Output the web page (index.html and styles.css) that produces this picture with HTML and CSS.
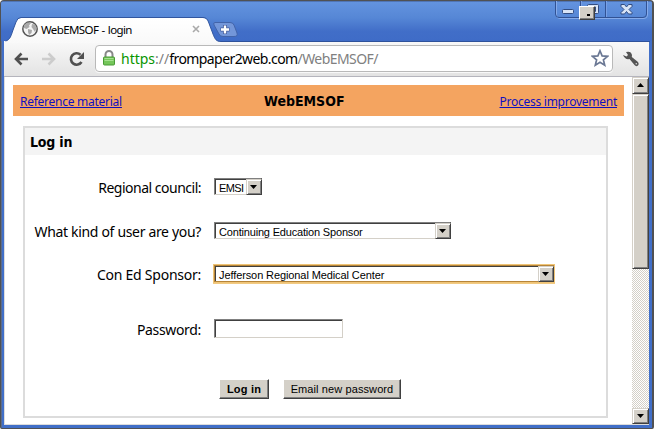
FILE: index.html
```html
<!DOCTYPE html>
<html lang="en">
<head>
<meta charset="utf-8">
<title>WebEMSOF - login</title>
<link rel="stylesheet" href="styles.css">
</head>
<body>
<div class="window">
  <header class="tabstrip">
    <div class="tab">
      <svg class="tab-shape" width="650" height="26" viewBox="0 0 650 26">
        <defs><linearGradient id="tabfill" x1="0" y1="0" x2="0" y2="1"><stop offset="0" stop-color="#fff"/><stop offset="1" stop-color="#f9f9f9"/></linearGradient></defs>
        <path d="M210 24.500H646" stroke="#2f529b" fill="none"/>
        <path d="M1.500 26V24C6 23 7 19 9 13L12 5Q13.500 1 17 1H199Q203 1 204.500 5L209 17C211 22 212 24.500 217 24.500V26Z" fill="url(#tabfill)"/>
        <path d="M1.500 24C6 23 7 19 9 13L12 5Q13.500 .500 17 .500H199Q203 .500 204.500 5L209 17C211 22 212 24.500 217 24.500" fill="none" stroke="#31569f"/>
        <path d="M211 5.500H226Q229 5.500 230 8L233 16Q234 19.500 230 19.500H219Q216 19.500 215 17L210 8Q209 5.500 211 5.500Z" fill="#7396d9" stroke="#4264aa"/>
        <path d="M221 8v9M216.500 12.500h9" stroke="#40599a" stroke-width="4"/>
        <path d="M221 8.500v8M217 12.500h8" stroke="#fff" stroke-width="2.400"/>
      </svg>
      <svg class="globe" width="18" height="18" viewBox="0 0 18 18"><circle cx="9" cy="9" r="7.200" fill="#f4f4f4" stroke="#555" stroke-width="1.500"/><path d="M3 5L6 2.500L10 3L8 5.500L8.500 7L5.500 9L3 8ZM7 9L11 10L10.500 13L8 15L7 12ZM11 4L14 4.500L15.500 8L14 12L12 9L10.500 7Z" fill="#aaa"/></svg>
      <span class="tab-title">WebEMSOF - login</span>
      <svg class="tab-close" width="8" height="8" viewBox="0 0 8 8"><path d="M1 1l6 6M7 1L1 7" stroke="#aaa" stroke-width="1.600"/></svg>
    </div>
    <svg class="controls" width="94" height="20" viewBox="0 0 94 20">
      <path d="M1.500 0V14Q1.500 17.500 5 17.500H89Q92.500 17.500 92.500 14V0" fill="none" stroke="#86abea"/>
      <path d="M.500 0V13Q.500 16.500 4 16.500H88Q91.500 16.500 91.500 13V0M25.500 0V16M50.500 0V16" fill="none" stroke="#315294"/>
      <path d="M26.500 0V16M51.500 0V16" stroke="#78a0e5"/>
      <rect x="7.500" y="8.500" width="11" height="4" rx="1" fill="#d8e4f6" stroke="#324d82"/>
      <rect x="32.500" y="3.500" width="11" height="9" rx="1" fill="#d8e4f6" stroke="#324d82"/><path d="M37 6h3.500v4.500h-2" fill="none" stroke="#324d82"/>
      <path d="M66 3.500h3.500l2 2.500l2-2.500H77v2l-3 3l3 3v1.500h-3.500l-2-2.500l-2 2.500H66v-1.500l3-3l-3-3Z" fill="#d8e4f6" stroke="#324d82"/>
    </svg>
    <span class="drag-chip"></span>
  </header>

  <nav class="toolbar">
    <svg width="90" height="34" viewBox="0 0 90 34">
      <path d="M24 17H12M17.500 11.500L12 17L17.500 22.500" fill="none" stroke="#505050" stroke-width="2.600"/>
      <path d="M38 17H50M44.500 11.500L50 17L44.500 22.500" fill="none" stroke="#ccc" stroke-width="2.600"/>
      <path d="M77.500 20A5.700 5.700 0 1 1 76.500 12.800" fill="none" stroke="#505050" stroke-width="2.600"/><path d="M80 10v7h-7Z" fill="#505050"/>
    </svg>
    <div class="address">
      <svg width="14" height="18" viewBox="0 0 14 18"><path d="M3.500 9V5.500a3.500 3.500 0 0 1 7 0V9" fill="none" stroke="#888" stroke-width="2"/><rect x="1.500" y="8" width="11" height="8" rx="1" fill="#75c65a" stroke="#489b35"/><path d="M2.500 9.500h9M2.500 11.500h9" stroke="#a6e190"/></svg>
      <span class="url"><span class="protocol"><span class="scheme">https</span><span class="dim">://</span></span>frompaper2web.com<span class="dim">/WebEMSOF/</span></span>
      <svg class="star" width="18" height="18" viewBox="0 0 18 18"><path d="M9 1.800L11.100 6.900L16.500 7.300L12.400 10.800L13.700 16.200L9 13.300L4.300 16.200L5.600 10.800L1.500 7.300L6.900 6.900Z" fill="#fff" stroke="#6b7894" stroke-width="1.700"/></svg>
    </div>
    <svg class="wrench" width="18" height="18" viewBox="0 0 18 18"><path d="M4 2Q9 .500 10 5L9.800 7L16 12Q17.500 14 16 15.500Q14 17 12.500 15L7.500 9Q3 10 1 5L4.500 6.500L6 5Z" fill="#555"/><circle cx="14.300" cy="13.800" r=".8" fill="#ddd"/></svg>
  </nav>

  <div class="viewport">
    <main class="page">
      <div class="banner">
        <a class="ref" href="#">Reference material</a>
        <h1>WebEMSOF</h1>
        <a class="imp" href="#">Process improvement</a>
      </div>
      <section class="panel">
        <h2>Log in</h2>
        <form class="form">
          <label class="tight">Regional council:</label>
          <div class="select s1"><span>EMSI</span><i class="drop"></i></div>
          <label>What kind of user are you?</label>
          <div class="select s2"><span>Continuing Education Sponsor</span><i class="drop"></i></div>
          <label class="loose">Con Ed Sponsor:</label>
          <div class="select s3 focused"><span>Jefferson Regional Medical Center</span><i class="drop"></i></div>
          <label>Password:</label>
          <input class="password" type="password">
          <div class="actions"><button class="login" type="button">Log in</button><button class="email" type="button">Email new password</button></div>
        </form>
      </section>
    </main>
    <aside class="scrollbar"><i class="bevel up"></i><i class="bevel thumb"></i><i class="track"></i><i class="bevel down"></i></aside>
  </div>
</div>
</body>
</html>
```
FILE: styles.css
```css
* { box-sizing: border-box; }
body { margin: 0; background: #fff; overflow: hidden; font-family: "Noto Sans", sans-serif; color: #000; }
.window { width: 654px; height: 429px; border: 1px solid #505153; border-right-width: 2px; border-radius: 4px 4px 2px 2px; background: #416fc8; overflow: hidden; padding: 0 3px; box-shadow: inset 1px 0 #5a6c8e; }
.tabstrip { position: relative; height: 40px; margin: 0 -3px; background: linear-gradient(#6393df, #5687d6 40%, #416ec8 75%, #3f6cc7); border-top: 1px solid #5075b5; }
.tab { display: flex; align-items: center; height: 26px; margin-left: 3px; padding: 0 0 0 17px; position: relative; top: 15px; }
.tab-shape { position: absolute; left: 0; top: 0; }
.globe { position: relative; top: -1px; }
.tab-title { position: relative; top: -1px; margin-left: 2px; font-size: 11.500px; letter-spacing: -.6px; word-spacing: .8px; width: 151px; white-space: nowrap; }
.tab-close { position: relative; top: -1px; }
.controls { position: absolute; left: 554px; top: -1px; }
.drag-chip { position: absolute; left: 578px; top: 4px; width: 16px; height: 14px; background: #d4d0c8; border: 1px solid; border-color: #fff #404040 #404040 #fff; box-shadow: inset -1px -1px #808080; }
.drag-chip::after { content: ""; position: absolute; left: 7px; top: 7px; width: 3px; height: 2px; background: #000; }
.toolbar { display: flex; align-items: center; height: 36px; background: linear-gradient(#f9f9f9, #e3e3e3); border-bottom: 1px solid #b5b5bd; }
.address { display: flex; align-items: center; margin-left: 1px; margin-top: -1px; width: 518px; height: 27px; background: #fff; border: 1px solid #b9b9b9; border-radius: 4px; padding-left: 6px; box-shadow: 0 1px #f8f8f8; }
.url { margin-left: 5px; flex: 1; white-space: nowrap; font-size: 14px; letter-spacing: -.58px; }
.protocol { letter-spacing: 0; }
.scheme { color: #079500; }
.dim { color: #808080; }
.star { margin-right: 3px; }
.wrench { margin-left: 9px; }
.viewport { display: flex; height: 348px; background: #fff; border-left: 1px solid #ddd; border-bottom: 1px solid #dcdcdc; }
.page { flex: 1; padding: 8px 8px 0; }
.banner { display: grid; grid-template-columns: 244px auto 1fr; align-items: center; height: 31px; background: #f4a460; padding: 1px 7px 0; }
.banner a { font-size: 12px; color: #1010c0; text-decoration: underline; letter-spacing: -.26px; }
.banner .imp { justify-self: end; }
h1, h2 { margin: 0; font-family: "DejaVu Sans Condensed", "DejaVu Sans", sans-serif; font-size: 14px; font-weight: bold; }
.panel { margin: 10px 16px 0 10px; height: 292px; border: 2px solid #dcdcdc; }
h2 { height: 27px; line-height: 28px; background: #f4f4f4; padding-left: 5px; letter-spacing: -.2px; }
.form { display: grid; grid-template-columns: 177px 1fr; grid-template-rows: 43px 45px 41px 69px 52px; column-gap: 12px; padding-top: 10px; align-items: center; }
label { text-align: right; font-size: 14px; letter-spacing: -.33px; padding: 2px 1px 0 0; white-space: nowrap; }
label.tight { letter-spacing: -.5px; }
label.loose { letter-spacing: -.25px; }
.select { display: flex; justify-content: space-between; height: 17px; width: 48px; background: #fff; border: 1px solid; border-color: #808080 #404040 #d4d0c8 #808080; box-shadow: inset 1px 1px #404040; font: 11px/16px "Liberation Sans", Arial, sans-serif; letter-spacing: -.18px; padding: 1px 0 0 4px; white-space: nowrap; }
.s1 { letter-spacing: -.6px; }
.s2 { width: 237px; }
.s3 { width: 340px; letter-spacing: -.1px; }
.focused { border-color: #b78539; box-shadow: inset 1px 1px #404040, 0 0 0 1px #efc477, 0 1px 0 1px #f2ca82; }
.drop, .bevel { position: relative; display: block; background: #d4d0c8; border: 1px solid; border-color: #d4d0c8 #404040 #404040 #d4d0c8; box-shadow: inset 1px 1px #fff, inset -1px -1px #808080; }
.drop { width: 16px; height: 16px; margin: -1px -1px 0 0; flex: none; }
.drop::after, .up::after, .down::after { content: ""; position: absolute; left: 3px; top: 5px; width: 7px; height: 4px; background: #000; clip-path: polygon(0 0, 100% 0, 50% 100%); }
.password { width: 129px; height: 19px; border: 1px solid; border-color: #808080 #d4d0c8 #d4d0c8 #808080; box-shadow: inset 1px 1px #404040; background: #fff; padding: 0; }
.actions { grid-column: 2; display: flex; gap: 14px; padding-left: 5px; }
button { height: 20px; width: 50px; padding: 0; border: 1px solid; border-color: #fff #404040 #404040 #fff; background: #d4d0c8; box-shadow: inset -1px -1px #808080; color: #000; font: 11px "Liberation Sans", Arial, sans-serif; white-space: nowrap; }
.login { font-weight: bold; letter-spacing: .2px; }
.email { width: 118px; letter-spacing: .1px; }
.scrollbar { width: 17px; display: flex; flex-direction: column; }
.bevel { height: 17px; }
.up::after { left: 4px; clip-path: polygon(50% 0, 100% 100%, 0 100%); }
.down::after { left: 4px; }
.thumb { height: 175px; }
.down { height: 16px; }
.track { flex: 1; background: repeating-conic-gradient(#d4d0c8 0 25%, #fff 0 50%) 0 0 / 2px 2px; }
```
